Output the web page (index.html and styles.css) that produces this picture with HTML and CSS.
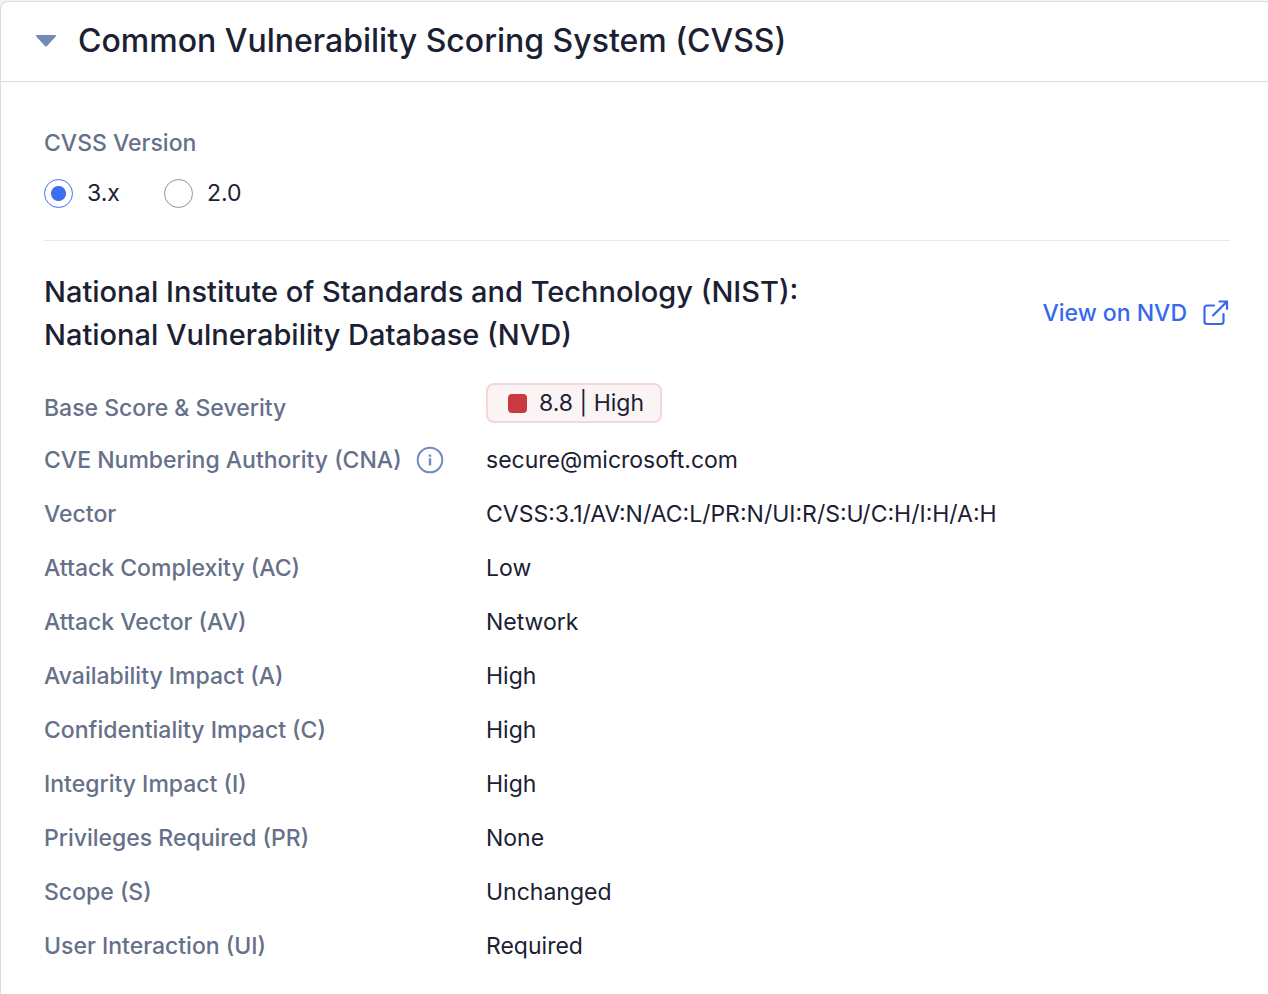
FILE: index.html
```html
<!DOCTYPE html>
<html lang="en">

<head>
    <meta charset="UTF-8">
    <meta name="viewport" content="width=device-width, initial-scale=1.0">
    <title>Common Vulnerability Scoring System (CVSS)</title>
    <link rel="stylesheet" href="styles.css">
</head>

<body>
    <details class="panel" open>
        <summary class="panel-header">
            <svg width="22" height="14" viewBox="0 0 22 14" aria-hidden="true">
                <path d="M1.8 1h18.400c.9 0 1.200.9.6 1.500l-9 9.700a1.100 1.100 0 0 1-1.600 0l-9-9.700C.6 1.900.9 1 1.800 1z" fill="#728bb9" />
            </svg>
            <h1>Common Vulnerability Scoring System (CVSS)</h1>
        </summary>

        <div class="panel-body">
            <fieldset class="version">
                <legend>CVSS Version</legend>
                <div class="radio-group">
                    <label class="radio"><input type="radio" name="version" value="3" checked> 3.x</label>
                    <label class="radio"><input type="radio" name="version" value="2"> 2.0</label>
                </div>
            </fieldset>

            <div class="source">
                <h2>National Institute of Standards and Technology (NIST):<br>National Vulnerability Database (NVD)</h2>
                <a class="nvd-link" href="#">
                    View on NVD
                    <svg width="28" height="28" viewBox="0 0 28 28" fill="none" stroke="currentColor" stroke-width="2.200" stroke-linecap="round" aria-hidden="true">
                        <path d="M12 6.500H5a2.500 2.500 0 0 0-2.500 2.500v13.500A2.500 2.500 0 0 0 5 25h14a2.500 2.500 0 0 0 2.500-2.500V15M17.500 2.500H25V10M25 2.500L11 16.500" />
                    </svg>
                </a>
            </div>

            <dl class="metrics">
                <dt>Base Score &amp; Severity</dt>
                <dd class="score"><span class="severity">8.8 | High</span></dd>
                <dt>
                    CVE Numbering Authority (CNA)
                    <svg width="28" height="28" viewBox="0 0 28 28" fill="none" stroke="#6f8ac0" stroke-width="2" aria-hidden="true">
                        <circle cx="14" cy="14" r="12.300" />
                        <path d="M14 12.300V19.500M14 8.500v2.200" stroke-width="2.400" />
                    </svg>
                </dt>
                <dd>secure@microsoft.com</dd>
                <dt>Vector</dt>
                <dd>CVSS:3.1/AV:N/AC:L/PR:N/UI:R/S:U/C:H/I:H/A:H</dd>
                <dt>Attack Complexity (AC)</dt>
                <dd>Low</dd>
                <dt>Attack Vector (AV)</dt>
                <dd>Network</dd>
                <dt>Availability Impact (A)</dt>
                <dd>High</dd>
                <dt>Confidentiality Impact (C)</dt>
                <dd>High</dd>
                <dt>Integrity Impact (I)</dt>
                <dd>High</dd>
                <dt>Privileges Required (PR)</dt>
                <dd>None</dd>
                <dt>Scope (S)</dt>
                <dd>Unchanged</dd>
                <dt>User Interaction (UI)</dt>
                <dd>Required</dd>
            </dl>
        </div>
    </details>
</body>

</html>
```
FILE: styles.css
```css
* {
    box-sizing: border-box;
}

body {
    display: flex;
    flex-direction: column;
    min-height: 100vh;
    margin: 0;
    padding-top: 1px;
    background-color: #f1f4f7;
    color: #1b2133;
    font-family: Inter, sans-serif;
    font-size: 23px;
    line-height: 32px;
}

.panel {
    flex: 1;
    border: 1px solid #d8dde8;
    border-right: none;
    border-bottom: none;
    border-top-left-radius: 8px;
    background-color: #fff;
}

.panel-header {
    display: flex;
    align-items: center;
    gap: 21px;
    padding: 15px 34px 17px;
    border-bottom: 1px solid #d8dde8;
    list-style: none;
    cursor: pointer;
}

h1,
h2 {
    margin: 0;
    font-weight: 500;
}

h1 {
    font-size: 32px;
    line-height: 47px;
}

h2 {
    font-size: 29px;
    line-height: 43px;
}

.panel-body {
    padding: 45px 38px 20px 43px;
}

.version {
    margin: 0;
    padding: 0 0 31px;
    border: none;
    border-bottom: 1px solid #e2e8f3;
}

.version legend {
    padding: 0;
    color: #667089;
    font-weight: 500;
}

.radio-group {
    display: flex;
    gap: 44px;
    padding-top: 18px;
}

.radio {
    display: flex;
    align-items: center;
    gap: 14px;
}

.radio input {
    appearance: none;
    width: 29px;
    height: 29px;
    margin: 0;
    border: 1px solid #8a92a6;
    border-radius: 50%;
    cursor: pointer;
}

.radio input:checked {
    border-color: #3d6ff2;
    background: radial-gradient(circle, #3d6ff2 7px, #fff 8px);
}

.source {
    display: flex;
    justify-content: space-between;
    align-items: center;
    padding: 29px 0 27px;
}

.nvd-link {
    display: flex;
    align-items: center;
    gap: 15px;
    color: #3569f0;
    font-weight: 500;
    text-decoration: none;
}

.metrics {
    display: grid;
    grid-template-columns: 400px 1fr;
    column-gap: 42px;
    margin: 0;
}

.metrics dt {
    display: flex;
    align-items: center;
    justify-content: space-between;
    color: #667089;
    font-weight: 500;
}

.metrics dd {
    margin: 0;
    padding: 11px 0;
}

.metrics .score {
    display: flex;
    padding: 0 0 10px;
}

.severity {
    display: flex;
    align-items: center;
    gap: 12px;
    padding: 2px 16px 2px 20px;
    border: 2px solid #f3d7d9;
    border-radius: 8px;
    background-color: #fbf4f5;
}

.severity::before {
    content: "";
    width: 19px;
    height: 19px;
    border-radius: 4px;
    background-color: #c9393e;
}
```
